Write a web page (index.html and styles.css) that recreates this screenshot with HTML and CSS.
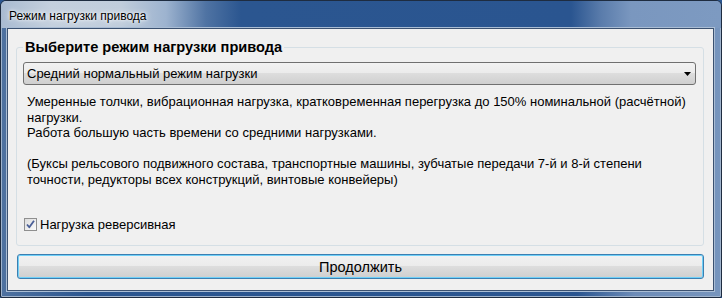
FILE: index.html
```html
<!DOCTYPE html>
<html lang="ru">
<head>
<meta charset="utf-8">
<title>Режим нагрузки привода</title>
<link rel="stylesheet" href="styles.css">
</head>
<body>
<div class="window">
  <div class="titlebar"><span class="title">Режим нагрузки привода</span></div>
  <div class="client">
    <fieldset class="group">
      <legend class="group-title">Выберите режим нагрузки привода</legend>
      <div class="select">
        <span class="select-text">Средний нормальный режим нагрузки</span>
        <svg class="select-arrow" width="7" height="4" viewBox="0 0 7 4"><path d="M0 0H7L3.5 4Z" fill="#000"/></svg>
      </div>
      <p class="desc">Умеренные толчки, вибрационная нагрузка, кратковременная перегрузка до 150% номинальной (расчётной) нагрузки.<br>Работа большую часть времени со средними нагрузками.<br><br>(Буксы рельсового подвижного состава, транспортные машины, зубчатые передачи 7-й и 8-й степени точности, редукторы всех конструкций, винтовые конвейеры)</p>
      <label class="check">
        <span class="check-box">
          <svg width="11" height="11" viewBox="0 0 11 11"><path d="M2 5.5L4.3 8.3L9 1.8" fill="none" stroke="#4a5f97" stroke-width="1.8" stroke-linejoin="round"/></svg>
        </span>
        <span class="check-label">Нагрузка реверсивная</span>
      </label>
    </fieldset>
    <button class="btn" type="button">Продолжить</button>
  </div>
</div>
</body>
</html>
```

FILE: styles.css
```css
* { box-sizing: border-box; }
html, body { margin: 0; padding: 0; }
body {
  width: 722px;
  height: 298px;
  font-family: "Liberation Sans", Arial, sans-serif;
  font-size: 13px;
  color: #000;
  background: #2b5690;
}
.window {
  width: 722px;
  height: 298px;
  display: flex;
  flex-direction: column;
  padding: 0 7px 6px 6px;
  border: 1px solid #1e2c40;
  border-radius: 6px 6px 2px 2px;
  box-shadow: inset 0 0 0 1px #9fb3cc;
  background: linear-gradient(90deg, #4f72a0 0%, #2b5690 12%, #2a5590 80%, #6d8cb8 88%, #7795bd 100%);
}
.titlebar {
  height: 27px;
  flex: none;
  display: flex;
  align-items: center;
  padding: 3px 0 0 8px;
  margin: 0 -7px 0 -6px;
  border-radius: 5px 5px 0 0;
  background: linear-gradient(90deg, #a9bbd1 0px, #c4d0de 50px, #c0cddc 120px, #9db3cf 165px, #4f73a3 205px, #2b5690 240px, #2a5590 570px, #5a7cab 600px, #7a97bf 630px, #7d9ac1 100%);
}
.title {
  font-size: 12px;
  color: #000;
  text-shadow: 0 0 6px #fff, 0 0 3px #fff;
}
.client {
  flex: 1;
  display: flex;
  flex-direction: column;
  background: #f0f0f0;
  border: 1px solid #3b5170;
  box-shadow: 0 0 0 1px #aabdd4;
  padding: 10px 9px 10px 8px;
}
.group {
  margin: 0;
  padding: 6px 7px 13px 6px;
  border: 1px solid #d5dfe5;
  border-radius: 3px;
  min-width: 0;
  height: 207px;
}
.group-title {
  padding: 0 2px;
  font-size: 14.6px;
  font-weight: bold;
  line-height: 17px;
}
.select {
  height: 23px;
  display: flex;
  align-items: center;
  justify-content: space-between;
  padding: 0 4px 0 3px;
  border: 1px solid #707070;
  border-radius: 3px;
  background: linear-gradient(#f2f2f2 0%, #ebebeb 50%, #dddddd 50%, #cfcfcf 100%);
}
.desc {
  margin: 9px 0 0 4px;
  line-height: 15.6px;
  height: 94px;
}
.check {
  display: flex;
  align-items: center;
  gap: 3px;
  margin-top: 29px;
  margin-left: 1px;
}
.check-box {
  width: 13px;
  height: 13px;
  border: 1px solid #8f8f8f;
  background: linear-gradient(135deg, #dcdcdc, #fbfbfb);
  display: flex;
  align-items: center;
  justify-content: center;
}
.check-label { line-height: 15px; }
.btn {
  margin: 8px 0 0 1px;
  height: 25px;
  flex: none;
  font-family: "Liberation Sans", Arial, sans-serif;
  font-size: 14.5px;
  color: #000;
  border: 1px solid #3c7fb1;
  border-radius: 3px;
  box-shadow: inset 0 0 0 1px #6fd0f8;
  background: linear-gradient(#f2f2f2 0%, #ebebeb 50%, #dddddd 50%, #cfcfcf 100%);
  padding: 0;
}
```
